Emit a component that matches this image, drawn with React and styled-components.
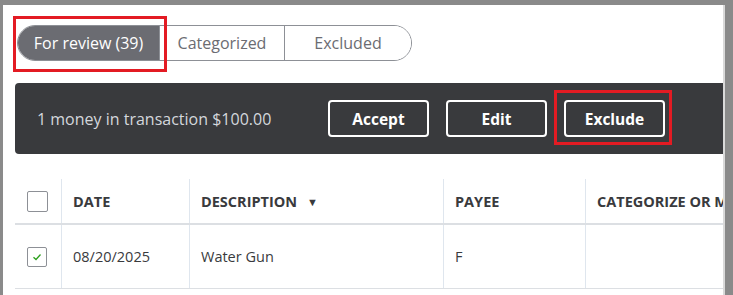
import React from "react";
import styled, { createGlobalStyle } from "styled-components";

const Global = createGlobalStyle`
  html, body { margin: 0; padding: 0; background: #fff; }
  body { font-family: "Open Sans", "Liberation Sans", sans-serif; }
  * { box-sizing: border-box; }
`;

const Frame = styled.div`
  position: relative;
  width: 733px;
  height: 295px;
  border-top: 5px solid #8a8a8a;
  border-left: 3px solid #8a8a8a;
  border-right: 8px solid #8a8a8a;
  overflow: hidden;
  background: #fff;
`;

const Content = styled.div`
  height: 100%;
  border-right: 2px solid #d9d9d9;
  padding-left: 12px;
  padding-top: 20px;
  display: flex;
  flex-direction: column;
  overflow: hidden;
`;

const Tabs = styled.div`
  display: flex;
  align-self: flex-start;
  margin-left: 2px;
  height: 36px;
  border: 1.5px solid #8d9096;
  border-radius: 18px;
  overflow: hidden;
`;

const Tab = styled.div`
  display: flex;
  align-items: center;
  justify-content: center;
  width: ${(p) => p.$w}px;
  font-size: 16px;
  color: ${(p) => (p.$active ? "#fff" : "#6b6c72")};
  background: ${(p) => (p.$active ? "#6b6c72" : "#fff")};
  border-left: ${(p) => (p.$first ? "none" : "1.5px solid #8d9096")};
`;

const Bar = styled.div`
  margin-top: 22px;
  height: 71px;
  width: 720px;
  flex-shrink: 0;
  background: #393a3d;
  border-radius: 4px;
  display: flex;
  align-items: center;
  padding-left: 22px;
`;

const BarText = styled.div`
  color: #d4d7dc;
  font-size: 16px;
  width: 271px;
  white-space: nowrap;
`;

const Buttons = styled.div`
  display: flex;
  gap: 17px;
  margin-left: 20px;
`;

const Button = styled.div`
  width: 101px;
  height: 37px;
  border: 2px solid #fff;
  border-radius: 4px;
  display: flex;
  align-items: center;
  justify-content: center;
  color: #fff;
  font-weight: 700;
  font-size: 15.5px;
`;

const Table = styled.div`
  margin-top: 25px;
  width: 720px;
`;

const Row = styled.div`
  display: grid;
  grid-template-columns: 46px 128px 254px 142px 1fr;
  height: ${(p) => p.$h}px;
  border-bottom: ${(p) => p.$b}px solid #dcdfe3;
`;

const Cell = styled.div`
  display: flex;
  align-items: center;
  padding-left: ${(p) => p.$pl ?? 11}px;
  border-left: ${(p) => (p.$first ? "none" : "1px solid #dfe6ee")};
  font-size: ${(p) => (p.$head ? "14.5px" : "14.5px")};
  font-weight: ${(p) => (p.$head ? 700 : 400)};
  color: #393a3d;
  white-space: nowrap;
  overflow: hidden;
`;

const Check = styled.div`
  width: ${(p) => p.$s}px;
  height: ${(p) => p.$s}px;
  border: 1px solid #8d9096;
  border-radius: 2px;
  display: flex;
  align-items: center;
  justify-content: center;
  background: #fff;
`;

const Caret = styled.span`
  font-size: 11px;
  margin-left: 10px;
`;

const Highlight = styled.div`
  position: absolute;
  left: ${(p) => p.$x}px;
  top: ${(p) => p.$y}px;
  width: ${(p) => p.$w}px;
  height: ${(p) => p.$h}px;
  border: 3.5px solid #e31b23;
  pointer-events: none;
`;

export default function App() {
  return (
    <>
      <Global />
      <Frame>
        <Content>
          <Tabs>
            <Tab $w={141} $active $first>For review (39)</Tab>
            <Tab $w={125}>Categorized</Tab>
            <Tab $w={127}>Excluded</Tab>
          </Tabs>
          <Bar>
            <BarText>1 money in transaction $100.00</BarText>
            <Buttons>
              <Button>Accept</Button>
              <Button>Edit</Button>
              <Button>Exclude</Button>
            </Buttons>
          </Bar>
          <Table>
            <Row $h={46} $b={2}>
              <Cell $first $pl={12}><Check $s={21} /></Cell>
              <Cell $head>DATE</Cell>
              <Cell $head>DESCRIPTION<Caret>▼</Caret></Cell>
              <Cell $head>PAYEE</Cell>
              <Cell $head>CATEGORIZE OR MATCH</Cell>
            </Row>
            <Row $h={64} $b={1}>
              <Cell $first $pl={12}>
                <Check $s={20}>
                  <svg width="10" height="10" viewBox="0 0 10 10">
                    <path d="M1.5 5.2 L4 7.5 L8.5 2.5" fill="none" stroke="#2ca01c" strokeWidth="1.3" />
                  </svg>
                </Check>
              </Cell>
              <Cell>08/20/2025</Cell>
              <Cell>Water Gun</Cell>
              <Cell>F</Cell>
              <Cell></Cell>
            </Row>
          </Table>
        </Content>
        <Highlight $x={10} $y={11} $w={154} $h={56} />
        <Highlight $x={551} $y={85} $w={118} $h={55} />
      </Frame>
    </>
  );
}
